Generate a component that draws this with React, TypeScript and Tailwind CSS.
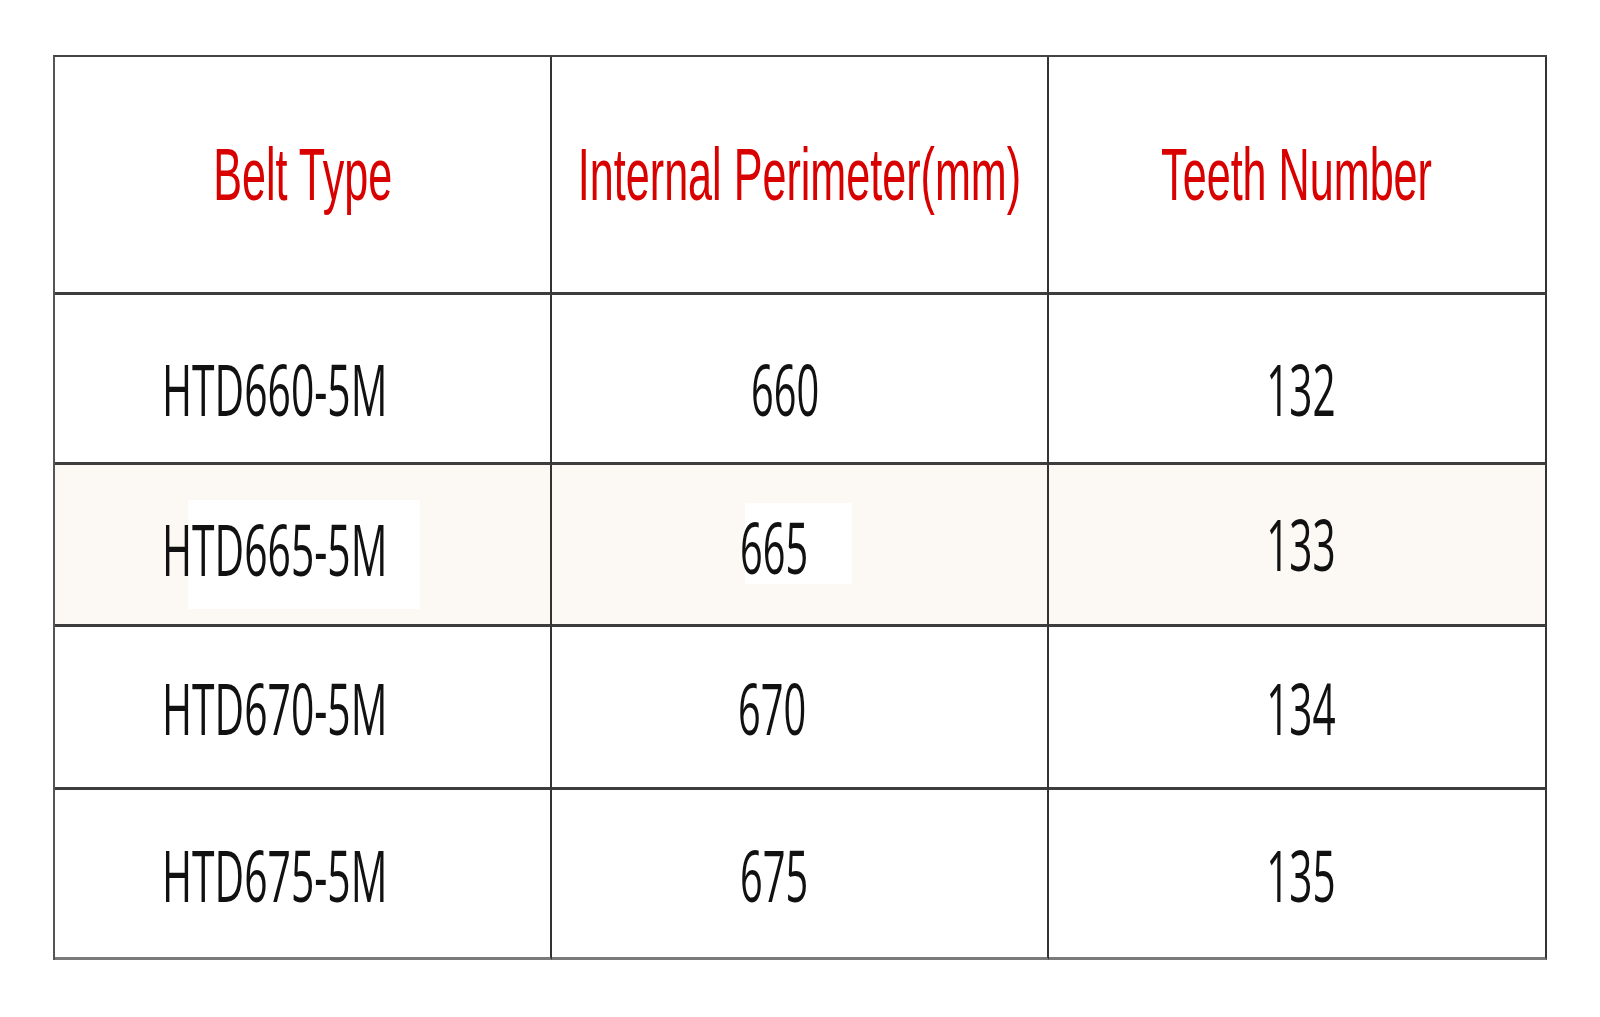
import React from 'react';

const rows = [
  { type: "HTD660-5M", perimeter: "660", teeth: "132", shade: false, pad: "pt-[20px]", pl: "pl-[199px]" },
  { type: "HTD665-5M", perimeter: "665", teeth: "133", shade: true, pad: "pb-[2px]", pl: "pl-[193px]" },
  { type: "HTD670-5M", perimeter: "670", teeth: "134", shade: false, pad: "pt-0", pl: "pl-[186px]" },
  { type: "HTD675-5M", perimeter: "675", teeth: "135", shade: false, pad: "pt-[2px]", pl: "pl-[188px]" },
];

const headFont = { fontFamily: '"Liberation Sans", Arial, sans-serif' };
const cellFont = { fontFamily: '"Open Sans", "Noto Sans", sans-serif' };

const HeadCell = ({ children }: { children: React.ReactNode }) => (
  <div className="flex items-center justify-center border-r-2 border-b-[3px] border-r-[#333] border-b-[#3d3d3d] bg-white">
    <span
      className="inline-block whitespace-nowrap text-[75px] leading-none text-[#d90000] scale-x-[0.575]"
      style={headFont}
    >
      {children}
    </span>
  </div>
);

const BeltTablePage: React.FC = () => {
  return (
    <div className="w-[1600px] h-[1017px] bg-white overflow-hidden">
      <div className="ml-[53px] mt-[55px] w-[1494px] grid grid-cols-[497px_497px_1fr] grid-rows-[238px_170px_162px_163px_170px] border-t-2 border-l-2 border-t-[#444] border-l-[#555]">
        <HeadCell>Belt Type</HeadCell>
        <HeadCell>Internal Perimeter(mm)</HeadCell>
        <HeadCell>Teeth Number</HeadCell>

        {rows.map((r, i) => {
          const last = i === rows.length - 1;
          const cell = `flex items-center border-r-2 border-b-[3px] border-r-[#333] ${last ? "border-b-[#7a7a7a]" : "border-b-[#3d3d3d]"} ${r.pad} ${r.shade ? "bg-[#fcf8f3]" : "bg-white"}`;
          const txt = "inline-block origin-left whitespace-nowrap text-[71px] leading-none text-[#111]";
          return (
            <React.Fragment key={r.type}>
              <div className={`${cell} pl-[107px]`}>
                {r.shade ? (
                  <div className="bg-white ml-[26px] mt-[22px] w-[232px] h-[109px] pb-[13px] flex items-center">
                    <span className={`${txt} -ml-[26px] scale-x-[0.575]`} style={cellFont}>{r.type}</span>
                  </div>
                ) : (
                  <span className={`${txt} scale-x-[0.575]`} style={cellFont}>{r.type}</span>
                )}
              </div>
              <div className={`${cell} ${r.pl}`}>
                {r.shade ? (
                  <div className="bg-white w-[107px] h-[81px] pt-[6px] flex items-center">
                    <span className={`${txt} -ml-[5px] scale-x-[0.56]`} style={cellFont}>{r.perimeter}</span>
                  </div>
                ) : (
                  <span className={`${txt} scale-x-[0.56]`} style={cellFont}>{r.perimeter}</span>
                )}
              </div>
              <div className={`${cell} justify-center pl-[8px]`}>
                <span
                  className="inline-block whitespace-nowrap text-[71px] leading-none text-[#111] scale-x-[0.57]"
                  style={cellFont}
                >
                  {r.teeth}
                </span>
              </div>
            </React.Fragment>
          );
        })}
      </div>
    </div>
  );
};

export default BeltTablePage;
